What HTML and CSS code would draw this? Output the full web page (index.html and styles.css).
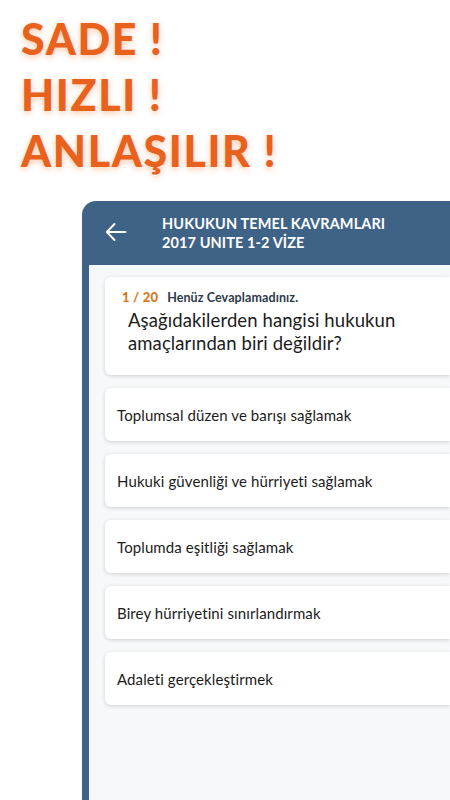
FILE: index.html
```html
<!DOCTYPE html>
<html lang="tr">
<head>
<meta charset="utf-8">
<link rel="stylesheet" href="styles.css">
</head>
<body>
<div class="page">
  <div class="slogan">
    <div class="line">SADE !</div>
    <div class="line">HIZLI !</div>
    <div class="line">ANLAŞILIR !</div>
  </div>
  <div class="device">
    <div class="header">
      <svg class="back" width="24" height="24" viewBox="0 0 24 24"><path d="M21.5 12H3M10.5 4L2.8 12l7.7 8" fill="none" stroke="#fff" stroke-width="1.9" stroke-linecap="round" stroke-linejoin="round"/></svg>
      <div class="title">HUKUKUN TEMEL KAVRAMLARI<br>2017 UNITE 1-2 VİZE</div>
    </div>
    <div class="content">
      <div class="card question">
        <div class="meta"><span class="num">1 / 20</span><span class="status">Henüz Cevaplamadınız.</span></div>
        <div class="qtext">Aşağıdakilerden hangisi hukukun amaçlarından biri değildir?</div>
      </div>
      <div class="card option">Toplumsal düzen ve barışı sağlamak</div>
      <div class="card option">Hukuki güvenliği ve hürriyeti sağlamak</div>
      <div class="card option">Toplumda eşitliği sağlamak</div>
      <div class="card option">Birey hürriyetini sınırlandırmak</div>
      <div class="card option">Adaleti gerçekleştirmek</div>
    </div>
  </div>
</div>
</body>
</html>
```
FILE: styles.css
```css
html, body {
  margin: 0;
  padding: 0;
  background: #ffffff;
  width: 450px;
  height: 800px;
  overflow: hidden;
  font-family: "Lato", "Noto Sans", sans-serif;
}
.page {
  display: flex;
  flex-direction: column;
  height: 800px;
}
.slogan {
  padding: 11px 0 0 21px;
  height: 201px;
  box-sizing: border-box;
  flex-shrink: 0;
}
.line {
  font-family: "Lato", sans-serif;
  font-weight: 900;
  font-size: 43px;
  line-height: 56px;
  color: #e8611d;
  letter-spacing: 1.6px;
  text-shadow: 0 2px 6px rgba(240, 130, 60, 0.45);
}
.device {
  margin-left: 82px;
  flex: 1;
  background: #3f6387;
  border-top-left-radius: 14px;
  padding-left: 7px;
  display: flex;
  flex-direction: column;
}
.header {
  height: 64px;
  display: flex;
  align-items: center;
  padding-left: 16px;
  box-sizing: border-box;
  flex-shrink: 0;
}
.back {
  margin-right: 34px;
  margin-top: -2px;
  margin-left: -1px;
}
.title {
  color: #ffffff;
  font-weight: 700;
  font-size: 14.5px;
  line-height: 19px;
  letter-spacing: 0.1px;
}
.content {
  flex: 1;
  background: #f6f8fa;
  padding: 12px 0 0 16px;
  display: flex;
  flex-direction: column;
  gap: 13px;
}
.card {
  background: #ffffff;
  border-radius: 6px 0 0 6px;
  box-shadow: 0 1px 4px rgba(0, 0, 0, 0.16);
  flex-shrink: 0;
}
.question {
  padding: 12px 10px 14px 17px;
  height: 98px;
  box-sizing: border-box;
}
.meta {
  font-weight: 700;
  line-height: 16px;
  display: flex;
  align-items: baseline;
  gap: 9px;
}
.num {
  color: #d9771c;
  font-weight: 900;
  font-size: 13px;
  letter-spacing: 0.2px;
}
.status {
  color: #2d3a48;
  font-size: 12.5px;
  letter-spacing: 0.1px;
}
.qtext {
  margin-top: 3px;
  padding-left: 6px;
  font-size: 18.5px;
  line-height: 23px;
  letter-spacing: 0.1px;
  color: #1c1c1c;
  padding-right: 40px;
}
.option {
  height: 53px;
  box-sizing: border-box;
  display: flex;
  align-items: center;
  padding-left: 12px;
  font-size: 15px;
  letter-spacing: 0.1px;
  color: #1c1c1c;
}
```
